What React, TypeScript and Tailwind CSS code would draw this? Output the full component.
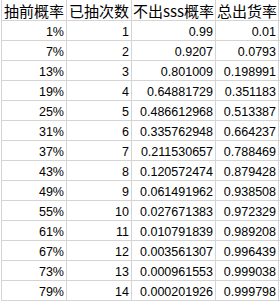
import React from "react";

const rows: [string, string, string, string][] = [
  ["1%", "1", "0.99", "0.01"],
  ["7%", "2", "0.9207", "0.0793"],
  ["13%", "3", "0.801009", "0.198991"],
  ["19%", "4", "0.64881729", "0.351183"],
  ["25%", "5", "0.486612968", "0.513387"],
  ["31%", "6", "0.335762948", "0.664237"],
  ["37%", "7", "0.211530657", "0.788469"],
  ["43%", "8", "0.120572474", "0.879428"],
  ["49%", "9", "0.061491962", "0.938508"],
  ["55%", "10", "0.027671383", "0.972329"],
  ["61%", "11", "0.010791839", "0.989208"],
  ["67%", "12", "0.003561307", "0.996439"],
  ["73%", "13", "0.000961553", "0.999038"],
  ["79%", "14", "0.000201926", "0.999798"],
];

const widths = ["w-[65px]", "w-[65px]", "w-[84px]", "w-[63px]"];

export default function App() {
  return (
    <div className="w-[280px] h-[302px] bg-white pl-[1px] overflow-hidden">
      <div className="border-l border-[#d4d4d4] w-[279px]">
        <div className="flex h-[21px] border-b border-[#d4d4d4]">
          {["抽前概率", "已抽次数", "不出sss概率", "总出货率"].map((h, i) => (
            <div
              key={i}
              className={`${widths[i]} shrink-0 border-r border-[#d4d4d4] flex items-end justify-center whitespace-nowrap overflow-visible text-[15px] leading-[18px] text-black`}
              style={{ fontFamily: '"Noto Sans CJK SC", "Noto Sans", sans-serif' }}
            >
              {h}
            </div>
          ))}
        </div>
        {rows.map((r, ri) => (
          <div key={ri} className="flex h-[20px] border-b border-[#d4d4d4]">
            {r.map((c, i) => (
              <div
                key={i}
                className={`${widths[i]} shrink-0 border-r border-[#d4d4d4] flex items-end justify-end pr-[2px] text-[12.5px] leading-[15px] text-black`}
                style={{ fontFamily: '"Liberation Sans", Arial, sans-serif' }}
              >
                {c}
              </div>
            ))}
          </div>
        ))}
      </div>
    </div>
  );
}
